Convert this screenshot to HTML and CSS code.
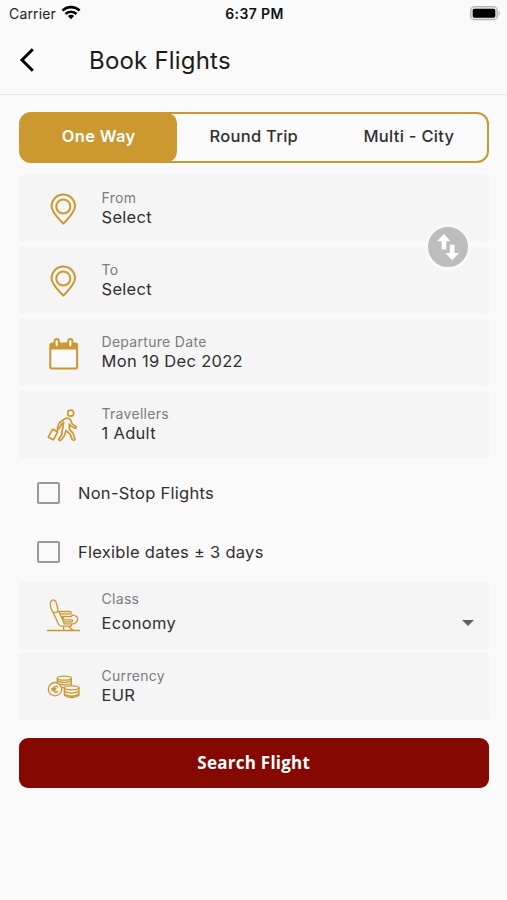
FILE: index.html
```html
<!DOCTYPE html>
<html lang="en">
<head>
<meta charset="utf-8">
<title>Book Flights</title>
<link rel="stylesheet" href="styles.css">
</head>
<body>
<div class="status">
  <div class="carrier"><span>Carrier</span>
    <svg width="20" height="15" viewBox="0 0 20 15" fill="none" stroke="#000" stroke-width="2.6"><path d="M1.4 5.7a12.2 12.2 0 0 1 17.2 0M4.5 9a7.8 7.8 0 0 1 11 0"/><path d="M10 14.2 6.9 11.1a4.4 4.4 0 0 1 6.2 0z" fill="#000" stroke="none"/></svg>
  </div>
  <time>6:37 PM</time>
  <svg class="battery" width="31" height="15" viewBox="0 0 31 15"><rect x=".7" y=".7" width="26.6" height="13" rx="4" fill="#e4e4e4" stroke="#b4b4b4" stroke-width="1.3"/><rect x="2.7" y="2.7" width="22.6" height="9" rx="1.8"/><path d="M28.6 4.7q2.4 2.5 0 5z" fill="#aaa"/></svg>
</div>
<header class="bar">
  <svg width="16" height="26" viewBox="0 0 16 26" fill="none" stroke="#000" stroke-width="3"><path d="M13.8 2.2 3 13l10.8 10.8"/></svg>
  <h1>Book Flights</h1>
</header>
<main>
  <nav class="tabs"><a class="tab active">One Way</a><a class="tab">Round Trip</a><a class="tab">Multi - City</a></nav>
  <section class="cards">
    <div class="card">
      <svg class="icon" viewBox="0 0 34 34"><path d="M17.3 31.6C12.5 26.4 5.6 20.5 5.6 14.3a11.7 11.7 0 0 1 23.4 0c0 6.2-6.9 12.1-11.7 17.3z"/><circle cx="17.3" cy="14.6" r="7"/></svg>
      <div class="text"><small>From</small><span>Select</span></div>
    </div>
    <div class="card">
      <svg class="icon" viewBox="0 0 34 34"><path d="M17.3 31.6C12.5 26.4 5.6 20.5 5.6 14.3a11.7 11.7 0 0 1 23.4 0c0 6.2-6.9 12.1-11.7 17.3z"/><circle cx="17.3" cy="14.6" r="7"/></svg>
      <div class="text"><small>To</small><span>Select</span></div>
    </div>
    <button class="swap" aria-label="Swap"><svg width="24" height="28" viewBox="0 0 24 28" fill="#fff"><path d="M7.8 1 14.6 8.2H10.2V16.4H5.6V8.2H1zM13.8 11.8h4.8V20h4.6L16.2 27.2 9.2 20h4.6z"/></svg></button>
    <div class="card">
      <svg class="icon" viewBox="0 0 34 34"><rect x="4.3" y="7.5" width="26.8" height="25" rx="1.8" fill="#fafafa"/><path d="M4 7h27.4v6.5H4z" fill="#cc9830" stroke="none"/><rect x="8.6" y="3.1" width="4.2" height="8.2" rx="2.1" fill="#fafafa"/><rect x="22.2" y="3.1" width="4.2" height="8.2" rx="2.1" fill="#fafafa"/></svg>
      <div class="text"><small>Departure Date</small><span>Mon 19 Dec 2022</span></div>
    </div>
    <div class="card">
      <svg class="icon fine walker" viewBox="18 22.5 102 102"><circle cx="92" cy="38" r="9"/><path d="M76 54q11-4 16 5l5 12 11 7q2 5-3 5L91 76l-3-5v15l11 12 6 18q-4 6-8 1l-7-16-12-11-5 16-10 13q-6 2-7-3l9-13 3-19 3-18-6 5-7 13q-5 2-6-3l7-15z"/><path d="m38 86 15 8-13 24-15-8zM51 91l5-8"/></svg>
      <div class="text"><small>Travellers</small><span>1 Adult</span></div>
    </div>
  </section>
  <label class="check"><i></i><span>Non-Stop Flights</span></label>
  <label class="check"><i></i><span>Flexible dates ± 3 days</span></label>
  <section class="cards lower">
    <div class="card class">
      <svg class="icon fine" viewBox="18 25.5 102 102"><path d="M38 64q-8-14-7-27 4-11 12-8 6 3 7 13 5 12 3 22-7 4-15 0zM40 67l16 35q3 5 9 5h28q3-3-1-7H73L57 64M59 63h32q5 3 1 7H63M67 78h27l2-4q18 1 17 12-1 10-12 14H72M70 78q-2 8 6 10h20q5 4-2 6H73M71 108v10M88 108v3l10 7"/><path d="M22 120h98"/></svg>
      <div class="text"><small>Class</small><span>Economy</span></div>
      <svg class="caret" width="12" height="6" viewBox="0 0 12 6"><path d="M0 0h12L6 6z" fill="#616161"/></svg>
    </div>
    <div class="card currency">
      <svg class="icon fine" viewBox="18 13.5 102 102"><ellipse cx="73" cy="38" rx="21" ry="6"/><path d="M52 38v12M94 38v21M53 46q20 10 41 0M61 56q17 5 33-2"/><circle cx="45" cy="71" r="20"/><path d="M53 64q-4-4-9-1-4 3-4 8t4 8q5 3 9-1M35 69h13M35 74h12"/><ellipse cx="95" cy="67" rx="22" ry="6"/><path d="M73 67v22q8 7 22 7t22-7V67M73 77q22 12 44 0M73 86q22 12 44 0M65 66h8"/></svg>
      <div class="text"><small>Currency</small><span>EUR</span></div>
    </div>
  </section>
  <button class="search">Search Flight</button>
</main>
</body>
</html>
```
FILE: styles.css
```css
* { box-sizing: border-box; }
body { margin: 0; height: 900px; background: #fafafa; color: #303030; font-family: Inter, "Liberation Sans", sans-serif; overflow: hidden; }
button { border: 0; padding: 0; }
.status { display: grid; grid-template-columns: 1fr auto 1fr; align-items: center; height: 27px; padding: 0 7px 0 9px; font-size: 14px; color: #222; }
.carrier { display: flex; align-items: center; gap: 6px; letter-spacing: .15px; }
.carrier svg { margin: -2px 0 0 -1px; }
.status time { font-weight: 600; color: #111; font-size: 14px; letter-spacing: .4px; }
.battery { justify-self: end; margin: -1px -1px 0 0; }
.bar { display: flex; align-items: center; height: 68px; padding: 0 20px 2px; border-bottom: 1px solid #e6e6e6; }
.bar svg { margin-left: -1px; }
h1 { margin: 1px 0 0 54px; font-size: 24px; font-weight: 400; color: #1c1c1c; letter-spacing: .2px; }
main { display: flex; flex-direction: column; padding: 17px 18.5px 0 19px; }
.tabs { display: flex; height: 51px; border: 2px solid #cc9830; border-radius: 12px; }
.tab { flex: 1; display: flex; align-items: center; justify-content: center; padding-bottom: 3px; font-size: 16.5px; font-weight: 500; letter-spacing: .3px; }
.tab.active { background: #cc9830; color: #fff; border-radius: 9px; box-shadow: 0 0 0 1px #cc9830; font-weight: 600; }
.cards { position: relative; display: flex; flex-direction: column; gap: 5px; margin-top: 12px; }
.card { display: flex; align-items: center; height: 67px; padding: 0 15px 0 27px; background: #f5f5f5; border-radius: 4px; }
.icon { width: 34px; height: 34px; fill: none; stroke: #cc9830; stroke-width: 2; stroke-linecap: round; stroke-linejoin: round; }
.fine { stroke-width: 4; }
.walker { stroke-width: 5; }
.text { display: flex; flex-direction: column; flex: 1; margin: -1px 0 0 21.5px; }
.text small { font-size: 14px; line-height: 18px; color: #7c7c7c; letter-spacing: .3px; }
.text span { font-size: 16.5px; line-height: 20px; letter-spacing: .3px; }
.class .text { gap: 5px; margin-top: -9px; }
.caret { margin-top: 15px; }
.swap { position: absolute; right: 18px; top: 48.5px; width: 46px; height: 46px; display: grid; place-items: center; border-radius: 50%; border: 3px solid #fafafa; background: #bdbdbd; }
.check { display: flex; align-items: center; height: 58.5px; padding-left: 18px; font-size: 16.5px; letter-spacing: .27px; }
.check:first-of-type { margin-top: 6px; }
.check i { width: 23px; height: 22px; margin-right: 18px; border: 2px solid #999; border-radius: 2px; }
.lower { margin-top: 1px; gap: 4px; }
.search { height: 50px; margin-top: 18px; padding-bottom: 2px; border-radius: 9px; background: #850900; color: #fff; font: 700 17px "Open Sans", sans-serif; letter-spacing: .25px; }
```
